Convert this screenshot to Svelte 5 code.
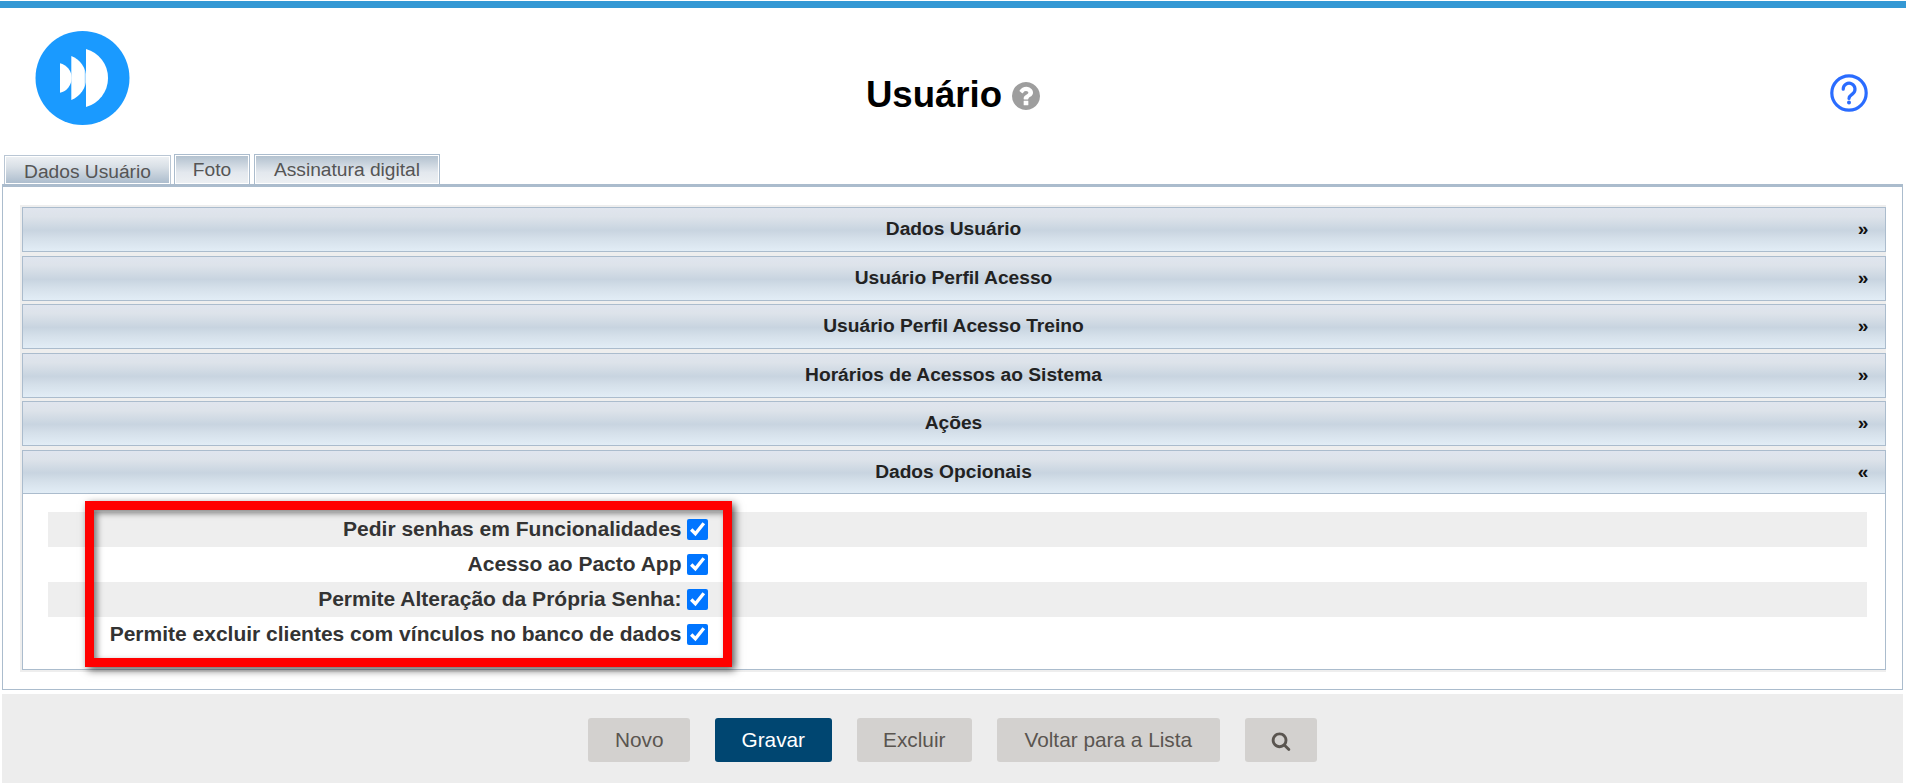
<script>
  const closed = ['Dados Usuário', 'Usuário Perfil Acesso', 'Usuário Perfil Acesso Treino', 'Horários de Acessos ao Sistema', 'Ações'];
  const options = ['Pedir senhas em Funcionalidades', 'Acesso ao Pacto App', 'Permite Alteração da Própria Senha:', 'Permite excluir clientes com vínculos no banco de dados'];
</script>

<div class="page">
  <div class="topbar"></div>
  <header class="head">
    <svg class="logo" viewBox="0 0 95 95" aria-label="logo">
      <circle cx="47.5" cy="47" r="47" fill="#1a9aff" />
      <g fill="#fff" transform="translate(-35 -31)">
        <path d="M86 49A30.1 30.1 0 0 1 86 107Z" />
        <path d="M71.3 56A23.6 23.6 0 0 1 71.3 100Z" />
        <path d="M60 63.3A15.1 15.1 0 0 1 60 92.7Z" />
      </g>
      <g fill="#1a9aff" transform="translate(-35 -31)">
        <rect x="84.6" y="49" width="1.4" height="58" opacity=".35" />
      </g>
    </svg>
    <div class="title">
      <h1>Usuário</h1>
      <svg class="q" viewBox="128 128 1536 1536"><path fill="#9e9e9e" d="M1024 1376v-192q0-14-9-23t-23-9h-192q-14 0-23 9t-9 23v192q0 14 9 23t23 9h192q14 0 23-9t9-23zm256-672q0-88-55.5-163t-138.5-116-170-41q-243 0-371 213-15 24 8 42l132 100q7 6 19 6 16 0 25-12 53-68 86-92 34-24 86-24 48 0 85.5 26t37.5 59q0 38-20 61t-68 45q-63 28-115.5 86.5t-52.5 125.5v36q0 14 9 23t23 9h192q14 0 23-9t9-23q0-19 21.5-49.5t54.5-49.5q32-18 49-28.5t46-35 44.5-48 28-60.5 12.5-81zm384 192q0 209-103 385.5t-279.5 279.5-385.5 103-385.5-103-279.5-279.5-103-385.5 103-385.5 279.5-279.5 385.5-103 385.5 103 279.5 279.5 103 385.5z"/></svg>
    </div>
    <svg class="help" viewBox="0 0 38 38" fill="none" stroke="#2a6cff" stroke-width="3.2">
      <circle cx="19" cy="19" r="17.2" />
      <path d="M13.2 15.2a5.9 5.9 0 1 1 9.4 4.7c-2 1.5-3.6 2.4-3.6 4.6" stroke-linecap="round" />
      <circle cx="19" cy="28.6" r="2" fill="#2a6cff" stroke="none" />
    </svg>
  </header>

  <nav class="tabs">
    <div class="tab active">Dados Usuário</div>
    <div class="tab foto">Foto</div>
    <div class="tab sign">Assinatura digital</div>
  </nav>

  <main class="panel">
    <section class="acc">
      {#each closed as name}
        <div class="bar"><span>{name}</span><b>»</b></div>
      {/each}
      <div class="open">
        <div class="bar last"><span>Dados Opcionais</span><b>«</b></div>
        <div class="content">
          {#each options as opt}
            <label class="row"><span>{opt}</span><input type="checkbox" checked /></label>
          {/each}
          <div class="mark"></div>
        </div>
      </div>
    </section>
  </main>

  <footer class="foot">
    <button>Novo</button>
    <button class="primary">Gravar</button>
    <button>Excluir</button>
    <button class="back">Voltar para a Lista</button>
    <button class="search" aria-label="Buscar">
      <svg viewBox="0 0 1792 1792"><path fill="#5a5550" d="M1216 832q0-185-131.5-316.5t-316.5-131.5-316.5 131.5-131.5 316.5 131.5 316.5 316.5 131.5 316.5-131.5 131.5-316.5zm512 832q0 52-38 90t-90 38q-54 0-90-38l-343-342q-179 124-399 124-143 0-273.5-55.5t-225-150-150-225-55.5-273.5 55.5-273.5 150-225 225-150 273.5-55.5 273.5 55.5 225 150 150 225 55.5 273.5q0 220-124 399l343 343q37 37 37 90z"/></svg>
    </button>
  </footer>
</div>

<style>
  :global(body) { margin: 0; background: #fff; }
  .page { width: 1906px; height: 783px; overflow: hidden; font-family: "Liberation Sans", Arial, sans-serif; }
  .topbar { height: 7px; margin-top: 1px; background: #3498d4; }

  .head { height: 145px; position: relative; display: flex; align-items: flex-start; justify-content: center; }
  .logo { position: absolute; left: 35px; top: 23px; width: 95px; height: 95px; }
  .help { position: absolute; left: 1830px; top: 66px; width: 38px; height: 38px; }
  .title { display: flex; align-items: center; gap: 10px; margin-top: 68px; }
  h1 { margin: 0; font-size: 36.6px; line-height: 38px; font-weight: 700; color: #000; }
  .q { width: 28px; height: 28px; margin-top: 2px; }

  .tabs { height: 31px; display: flex; align-items: flex-end; padding-left: 4px; }
  .tab { box-sizing: border-box; height: 30.5px; border: 1.5px solid #abbccd; border-bottom: 0; box-shadow: inset 0 0 0 1px #fff; color: #555; font-size: 19.2px; text-align: center; line-height: 29px; background: linear-gradient(#b0bfcd, #e3e8ee 60%, #edf0f3); }
  .active { width: 167px; height: 29px; background: linear-gradient(#eef1f4, #d8dfe6 40%, #aabbcc); line-height: 31px; border-color: #b9c6d4; }
  .foto { width: 76px; margin-left: 3px; }
  .sign { width: 186px; margin-left: 4px; }

  .panel { box-sizing: border-box; margin: 0 3px 0 2px; height: 506px; border: 1.5px solid #abbccd; border-top-width: 3px; padding: 18px 16.5px 0 16.5px; }
  .acc { box-sizing: border-box; height: 467px; background: #eee; padding: 2px 0 2px 2px; display: flex; flex-direction: column; gap: 3.5px; }
  .bar { box-sizing: border-box; flex: none; height: 45px; padding-bottom: 1px; border: 1.5px solid #abbccd; position: relative; display: flex; align-items: center; justify-content: center; font-size: 19.2px; font-weight: 700; color: #222; background: linear-gradient(#e0e5ee 0, #dde3ea 20%, #c8d4e0 52%, #d5e0ea 72%, #e2edf6 100%); }
  .bar.last { height: 44px; padding-bottom: 0; }
  .bar b { position: absolute; right: 16px; color: #111; }
  .open { flex: 1; display: flex; flex-direction: column; background: #fff; }
  .content { flex: 1; position: relative; box-sizing: border-box; border: 1.5px solid #abbccd; border-top: 0; padding: 18px 17.5px 0 25px; }
  .row { height: 35px; display: grid; grid-template-columns: 634px 21px; gap: 5px; align-items: center; font-size: 21px; font-weight: 700; color: #333; }
  .row:nth-child(odd) { background: #eee; }
  .row span { text-align: right; }
  .row input { width: 21px; height: 21px; margin: 0; accent-color: #0075ff; }
  .mark { position: absolute; left: 62px; top: 7px; width: 647px; height: 166px; box-sizing: border-box; border: 9px solid #f00; box-shadow: 3px 3px 8px rgba(0,0,0,.65), inset 3px 3px 6px rgba(0,0,0,.5); pointer-events: none; }

  .foot { box-sizing: border-box; margin: 4px 3px 0 2px; height: 89px; background: #ededed; padding-top: 24px; display: flex; align-items: flex-start; justify-content: center; gap: 25px; }
  button { box-sizing: border-box; height: 44px; padding: 0 26.5px; border: 0; border-radius: 3px; background: #d3d1cf; color: #5a5550; font: 20.8px "Liberation Sans", Arial, sans-serif; }
  .back { padding: 0 27.5px; }
  .primary { background: #004671; color: #fff; }
  .search { width: 72px; padding: 2px 0 0; display: flex; align-items: center; justify-content: center; }
  .search svg { width: 20px; height: 20px; }
</style>
